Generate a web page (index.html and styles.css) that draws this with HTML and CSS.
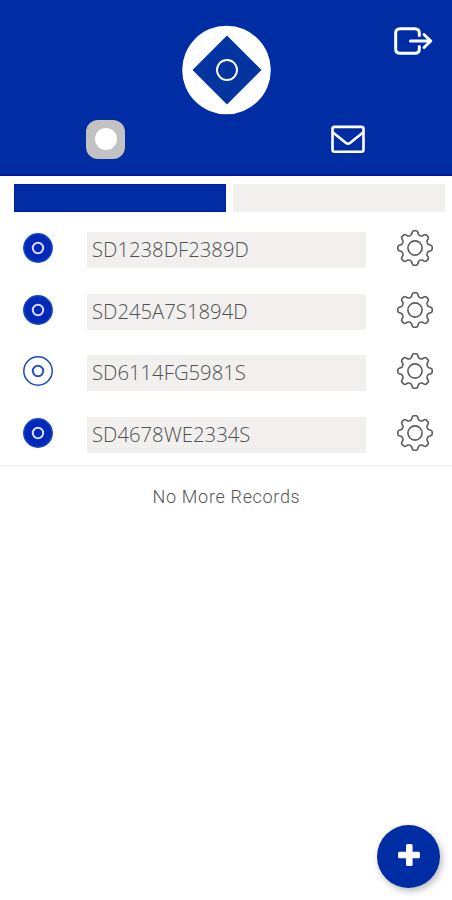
FILE: index.html
```html
<!DOCTYPE html>
<html lang="en">
<head>
<meta charset="utf-8">
<title>Records</title>
<link rel="stylesheet" href="styles.css">
</head>
<body>
<svg class="defs" width="0" height="0" aria-hidden="true">
  <defs>
    <path id="tooth" d="M-5.1-12.3Q-3.6-12.9-3.3-14L-2.8-15.8Q-2.4-17.2-1.1-17.2H1.1Q2.4-17.2 2.8-15.8L3.3-14Q3.6-12.9 5.1-12.3"/>
    <symbol id="gear" viewBox="-19 -19 38 38">
      <use href="#tooth"/><use href="#tooth" transform="rotate(45)"/><use href="#tooth" transform="rotate(90)"/><use href="#tooth" transform="rotate(135)"/>
      <use href="#tooth" transform="rotate(180)"/><use href="#tooth" transform="rotate(225)"/><use href="#tooth" transform="rotate(270)"/><use href="#tooth" transform="rotate(315)"/>
      <circle r="7.1"/>
    </symbol>
    <symbol id="dot" viewBox="-16 -16 32 32"><circle class="disc" r="14.2"/><circle class="ring" r="5.2"/></symbol>
  </defs>
</svg>
<header class="header">
  <div class="top">
    <svg class="logo" viewBox="-45 -45 90 90"><circle cx="-.5" r="44.3" fill="#fff"/><path d="M0-34.500 34.500 0 0 34.500-34.500 0Z" fill="#03349f"/><circle r="10" fill="none" stroke="#fff" stroke-width="1.900"/></svg>
    <svg class="logout" viewBox="0 0 40 28"><path d="M26.300 8.500V6Q26.300 1.700 22 1.700H7Q2.700 1.700 2.700 6V22Q2.700 26.300 7 26.300H22Q26.300 26.300 26.300 22V19.500M17.500 14H37.500M31 7.500 37.800 14 31 20.500"/></svg>
  </div>
  <nav class="nav">
    <button class="nav-item" aria-label="Status"><span class="knob"></span></button>
    <button class="nav-item" aria-label="Messages"><svg class="mail" viewBox="0 0 34 28"><rect x="1.500" y="1.900" width="31" height="24.800" rx="2"/><path d="M2 7.500 15 18Q17 19.500 19 18L32 7.500"/></svg></button>
  </nav>
</header>
<div class="tabs"><div class="tab active"></div><div class="tab"></div></div>
<main class="list">
  <div class="row"><svg class="dot"><use href="#dot"/></svg><div class="field"><span>SD1238DF2389D</span></div><svg class="gear"><use href="#gear"/></svg></div>
  <div class="row"><svg class="dot"><use href="#dot"/></svg><div class="field"><span>SD245A7S1894D</span></div><svg class="gear"><use href="#gear"/></svg></div>
  <div class="row"><svg class="dot open"><use href="#dot"/></svg><div class="field"><span>SD6114FG5981S</span></div><svg class="gear"><use href="#gear"/></svg></div>
  <div class="row"><svg class="dot"><use href="#dot"/></svg><div class="field"><span>SD4678WE2334S</span></div><svg class="gear"><use href="#gear"/></svg></div>
</main>
<p class="end">No More Records</p>
<button class="add" aria-label="Add"><svg viewBox="0 0 24 24"><rect x="9" y="1" width="6.600" height="22" rx="1.600"/><rect x="1" y="8.700" width="22" height="6.600" rx="1.600"/></svg></button>
</body>
</html>
```
FILE: styles.css
```css
* { box-sizing: border-box; }
body { margin: 0; min-height: 900px; background: #fff; font-family: "Open Sans", sans-serif; overflow: hidden; }
button { border: 0; padding: 0; background: none; }
svg { display: block; }
.defs { position: absolute; }
.header { height: 176px; background: #002da4; border-bottom: 2px solid #00199b; }
.top { display: grid; grid-template-columns: 1fr 90px 1fr; height: 117px; padding-top: 25px; padding-left: 1px; }
.logo { grid-column: 2; width: 90px; height: 90px; }
.logout { justify-self: end; width: 40px; height: 28px; margin: 2px 19px 0 0; fill: none; stroke: #fff; stroke-width: 3; stroke-linecap: round; stroke-linejoin: round; }
.nav { display: flex; justify-content: space-between; align-items: center; height: 44px; padding: 0 87px 0 86px; }
.knob { display: flex; width: 39px; height: 39px; border-radius: 12px; background: #c2c2c2; }
.knob::after { content: ""; width: 22px; height: 22px; margin: auto; border-radius: 50%; background: #fff; }
.mail { width: 34px; height: 28px; fill: none; stroke: #fff; stroke-width: 2.600; }
.tabs { display: grid; grid-template-columns: 212px 212px; gap: 7px; padding: 8px 7px 0 14px; }
.tab { height: 27.500px; background: #f1f0ef; }
.tab.active { background: #002da4; border: 1px solid #0519a5; }
.list { padding-top: 5.900px; border-bottom: 2px solid #f3f3f3; height: 255.500px; }
.row { display: grid; grid-template-columns: 65px 279px 38px; align-items: center; height: 61.600px; padding-left: 22px; }
.dot { --disc: #0028b9; --ring: #d5ddff; width: 32px; height: 32px; }
.dot.open { --disc: #fff; --ring: #2455c4; }
.disc { fill: var(--disc); stroke: #164bc0; stroke-width: 1.500; }
.ring { fill: none; stroke: var(--ring); stroke-width: 2; }
.field { display: flex; align-items: center; height: 36px; margin-top: 4px; padding-left: 5px; background: #f1f0ef; color: #505050; font-size: 20.300px; font-weight: 300; line-height: 35px; white-space: nowrap; }
.field span { margin-top: -1px; }
.gear { width: 38px; height: 38px; margin-left: 29.500px; fill: none; stroke: #5a5a5a; stroke-width: 1.600; }
.end { margin: 18px 0 0; padding-left: 1px; text-align: center; color: #555; font: 300 18px/24px Roboto, sans-serif; letter-spacing: .68px; }
.add { position: fixed; right: 12px; bottom: 12px; width: 63px; height: 63px; display: grid; place-items: center; border-radius: 50%; background: #002da4; box-shadow: 2px 3px 7px rgba(0,0,0,.28); }
.add svg { width: 24px; height: 24px; fill: #fff; margin-bottom: 3px; }
```
